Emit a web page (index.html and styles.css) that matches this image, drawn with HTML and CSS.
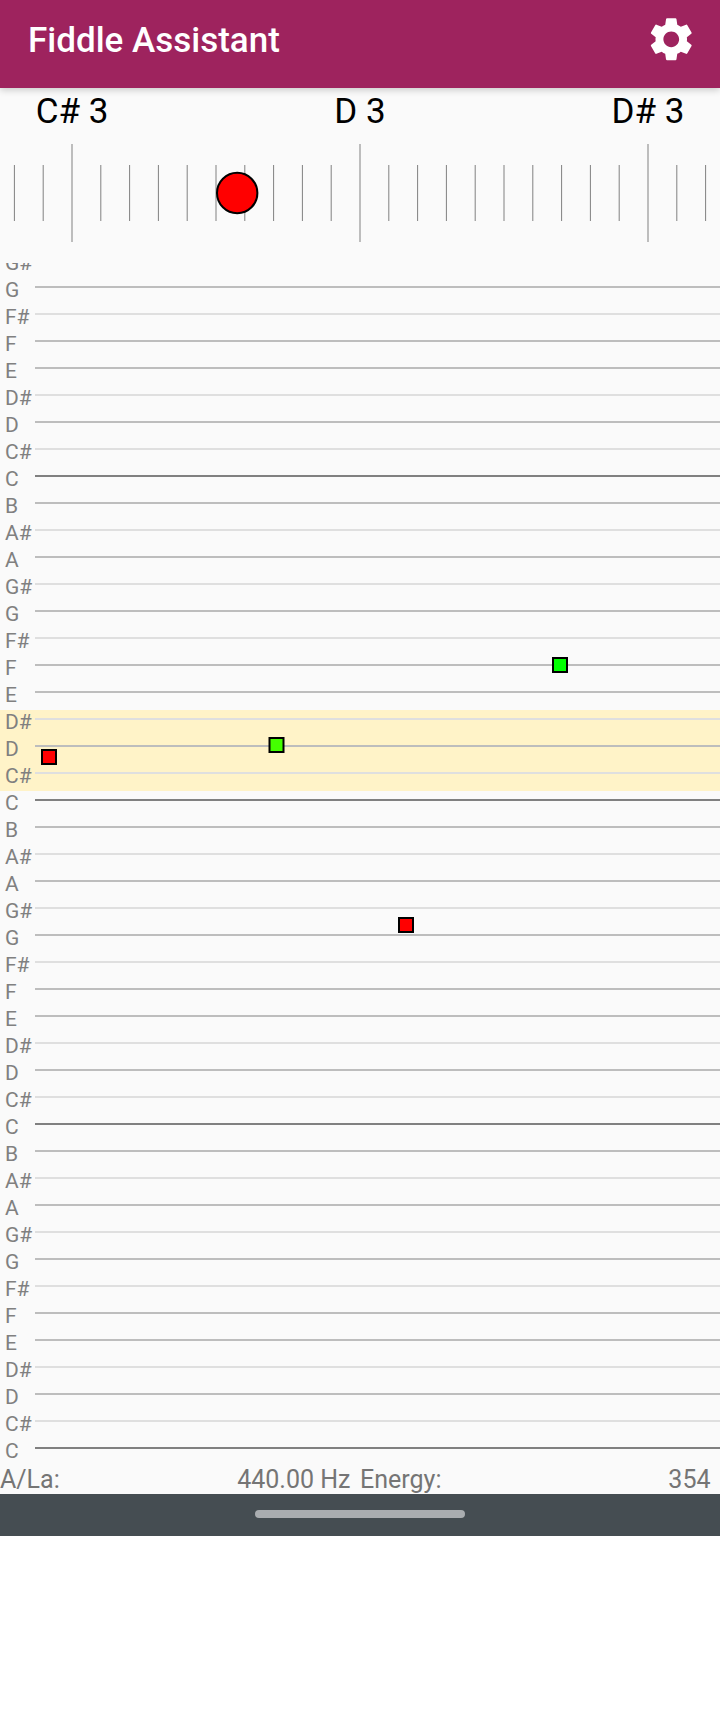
FILE: index.html
```html
<!DOCTYPE html>
<html lang="en">
<head>
<meta charset="utf-8">
<title>Fiddle Assistant</title>
<link rel="stylesheet" href="styles.css">
</head>
<body>
<header class="app-bar">
  <h1 class="title">Fiddle Assistant</h1>
  <svg class="gear" viewBox="0 0 24 24" role="img" aria-label="Settings"><path d="M19.14,12.94c0.04-0.3,0.06-0.61,0.06-0.94c0-0.32-0.02-0.64-0.07-0.94l2.03-1.58c0.18-0.14,0.23-0.41,0.12-0.61l-1.92-3.32c-0.12-0.22-0.37-0.29-0.59-0.22l-2.39,0.96c-0.5-0.38-1.03-0.7-1.62-0.94L14.4,2.81c-0.04-0.24-0.24-0.41-0.48-0.41h-3.84c-0.24,0-0.43,0.17-0.47,0.41L9.25,5.35C8.66,5.59,8.12,5.92,7.63,6.29L5.24,5.33c-0.22-0.08-0.47,0-0.59,0.22L2.74,8.87C2.62,9.08,2.66,9.34,2.86,9.48l2.03,1.58C4.84,11.36,4.8,11.69,4.8,12s0.02,0.64,0.07,0.94l-2.03,1.58c-0.18,0.14-0.23,0.41-0.12,0.61l1.92,3.32c0.12,0.22,0.37,0.29,0.59,0.22l2.39-0.96c0.5,0.38,1.03,0.7,1.62,0.94l0.36,2.54c0.05,0.24,0.24,0.41,0.48,0.41h3.84c0.24,0,0.44-0.17,0.47-0.41l0.36-2.54c0.59-0.24,1.13-0.56,1.62-0.94l2.39,0.96c0.22,0.08,0.47,0,0.59-0.22l1.92-3.32c0.12-0.22,0.07-0.47-0.12-0.61L19.14,12.94z M12,15.6c-1.98,0-3.6-1.62-3.6-3.6s1.62-3.6,3.6-3.6s3.6,1.62,3.6,3.6S13.98,15.6,12,15.6z"/></svg>
</header>
<main class="screen">
  <section class="tuner">
    <div class="notes"><span>C# 3</span><span>D 3</span><span>D# 3</span></div>
    <svg class="scale" viewBox="0 0 720 98">
      <path class="tick" d="M14.4 21v56M43.2 21v56M100.8 21v56M129.6 21v56M158.4 21v56M187.2 21v56M216 21v56M244.8 21v56M273.6 21v56M302.4 21v56M331.2 21v56M388.8 21v56M417.6 21v56M446.4 21v56M475.2 21v56M504 21v56M532.8 21v56M561.6 21v56M590.4 21v56M619.2 21v56M676.8 21v56M705.6 21v56"/>
      <path class="tick" d="M72 0v98M360 0v98M648 0v98"/>
      <circle class="needle" cx="237.2" cy="49" r="20.2"/>
    </svg>
  </section>
  <section class="roll">
    <div class="band"></div>
    <div class="rows">
      <div class="row sharp">G#</div>
      <div class="row">G</div>
      <div class="row sharp">F#</div>
      <div class="row">F</div>
      <div class="row">E</div>
      <div class="row sharp">D#</div>
      <div class="row">D</div>
      <div class="row sharp">C#</div>
      <div class="row octave">C</div>
      <div class="row">B</div>
      <div class="row sharp">A#</div>
      <div class="row">A</div>
      <div class="row sharp">G#</div>
      <div class="row">G</div>
      <div class="row sharp">F#</div>
      <div class="row">F</div>
      <div class="row">E</div>
      <div class="row sharp">D#</div>
      <div class="row">D</div>
      <div class="row sharp">C#</div>
      <div class="row octave">C</div>
      <div class="row">B</div>
      <div class="row sharp">A#</div>
      <div class="row">A</div>
      <div class="row sharp">G#</div>
      <div class="row">G</div>
      <div class="row sharp">F#</div>
      <div class="row">F</div>
      <div class="row">E</div>
      <div class="row sharp">D#</div>
      <div class="row">D</div>
      <div class="row sharp">C#</div>
      <div class="row octave">C</div>
      <div class="row">B</div>
      <div class="row sharp">A#</div>
      <div class="row">A</div>
      <div class="row sharp">G#</div>
      <div class="row">G</div>
      <div class="row sharp">F#</div>
      <div class="row">F</div>
      <div class="row">E</div>
      <div class="row sharp">D#</div>
      <div class="row">D</div>
      <div class="row sharp">C#</div>
      <div class="row octave">C</div>
    </div>
    <svg class="played" viewBox="0 0 720 1200">
      <rect class="off" x="42" y="487" width="14" height="14"/>
      <rect class="near" x="269.5" y="475" width="14" height="14"/>
      <rect class="off" x="399" y="655" width="14" height="14"/>
      <rect class="on" x="553" y="395" width="14" height="14"/>
    </svg>
  </section>
  <footer class="status">
    <div class="reading"><span>A/La:</span><span>440.00 Hz</span></div>
    <div class="reading"><span>Energy:</span><span>354</span></div>
  </footer>
</main>
<nav class="system-nav"><div class="pill"></div></nav>
</body>
</html>
```
FILE: styles.css
```css
* { box-sizing: border-box; }

body {
  margin: 0;
  width: 720px;
  height: 1712px;
  background: #fff;
  font-family: Roboto, sans-serif;
  overflow: hidden;
}

.app-bar {
  position: relative;
  z-index: 1;
  display: flex;
  justify-content: space-between;
  height: 88px;
  padding: 13px 23px 0 28px;
  background: #9e235e;
  box-shadow: 0 2px 7px rgba(0, 0, 0, 0.2);
}

.title {
  margin: 7px 0 0;
  color: #fff;
  font-size: 35px;
  font-weight: 500;
  line-height: 41px;
}

.gear {
  width: 52.5px;
  height: 52.5px;
  fill: #fff;
}

.screen {
  height: 1406px;
  background: #fafafa;
}

.tuner { height: 175px; }

.notes {
  display: grid;
  grid-template-columns: 144px 432px 144px;
  height: 56px;
  padding-top: 3px;
  color: #000;
  font-size: 35px;
  line-height: 41px;
  text-align: center;
}

.scale {
  display: block;
  width: 720px;
  height: 98px;
}

.tick {
  fill: none;
  stroke: #808080;
  stroke-width: 1;
}

.needle {
  fill: #f00;
  stroke: #000;
  stroke-width: 2;
}

.roll {
  position: relative;
  height: 1200px;
  overflow: hidden;
}

.band {
  position: absolute;
  top: 446.5px;
  left: 0;
  width: 100%;
  height: 81px;
  background: #fff3c8;
}

.rows {
  position: relative;
  margin-top: -16px;
}

.row {
  display: flex;
  height: 27px;
  padding-left: 5px;
  color: #808080;
  font-size: 21px;
  line-height: 32px;
  background: linear-gradient(#bdbdbd, #bdbdbd) 35px 12px / 685px 2px no-repeat;
}

.row.sharp { background-image: linear-gradient(#dfdfdf, #dfdfdf); }

.row.octave { background-image: linear-gradient(#808080, #808080); }

.played {
  position: absolute;
  inset: 0;
  width: 720px;
  height: 1200px;
  stroke: #000;
  stroke-width: 2;
}

.off { fill: #f00; }
.near { fill: #4f0; }
.on { fill: #0f0; }

.status {
  display: grid;
  grid-template-columns: 1fr 1fr;
  height: 31px;
  padding-top: 1px;
  color: #757575;
  font-size: 25px;
  line-height: 31px;
}

.reading {
  display: flex;
  justify-content: space-between;
  padding-right: 9.5px;
}

.system-nav {
  display: flex;
  justify-content: center;
  height: 42px;
  padding-top: 16px;
  background: #454d52;
}

.pill {
  width: 210px;
  height: 8px;
  border-radius: 4px;
  background: #a9adb0;
}
```
